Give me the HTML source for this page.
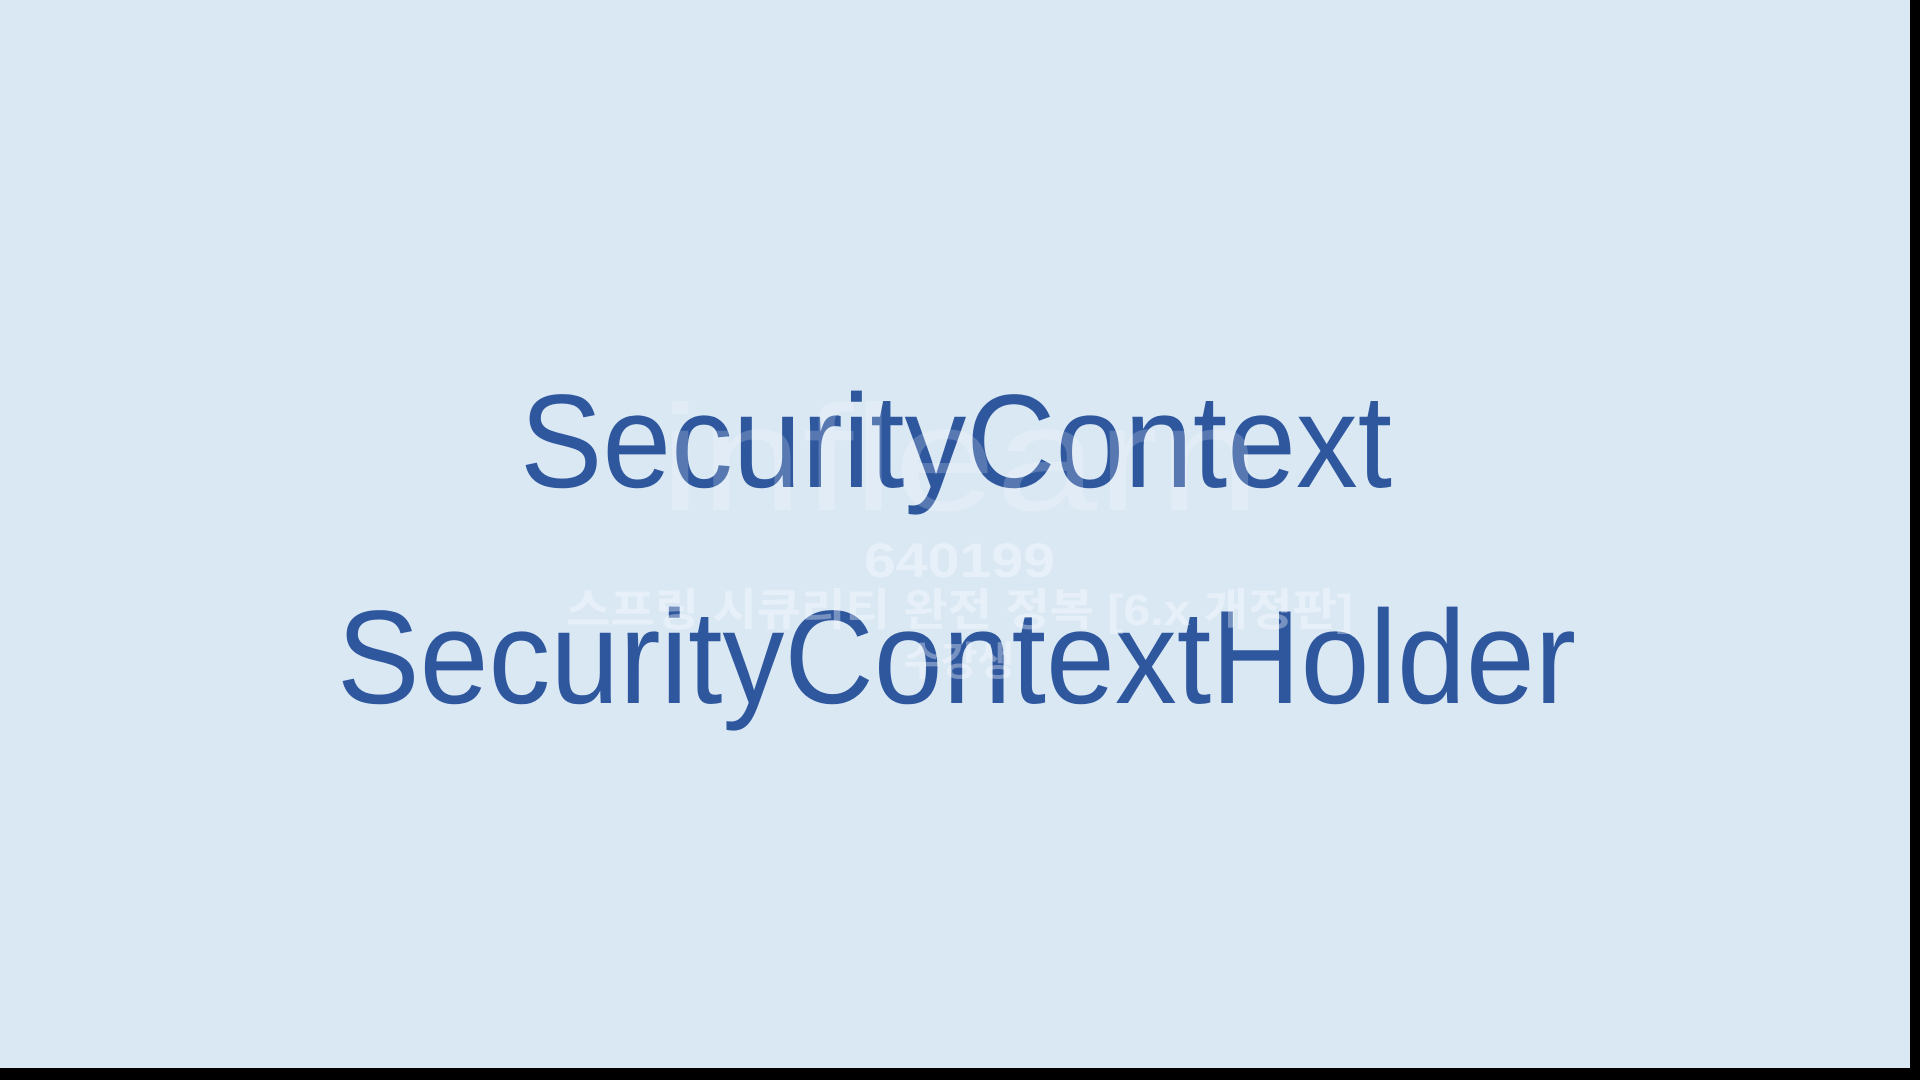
<!DOCTYPE html>
<html><head><meta charset="utf-8"><style>
html,body{margin:0;padding:0;width:1920px;height:1080px;overflow:hidden;background:#000}
</style></head><body>
<svg width="1920" height="1080" xmlns="http://www.w3.org/2000/svg" style="display:block">
<rect x="0" y="0" width="1920" height="1080" fill="#000"/>
<rect x="0" y="0" width="1910" height="1068" fill="#dae8f4"/>
<text x="520" y="487" font-family="Liberation Sans, sans-serif" font-size="133" fill="#2e579e" textLength="872" lengthAdjust="spacingAndGlyphs">SecurityContext</text>
<text x="337" y="703" font-family="Liberation Sans, sans-serif" font-size="133" fill="#2e579e" textLength="1239" lengthAdjust="spacingAndGlyphs">SecurityContextHolder</text>
<g fill="#ffffff" fill-opacity="0.35" font-family="Liberation Sans, 'Noto Sans CJK KR', sans-serif" font-weight="bold">
<text x="660" y="510" font-size="150" font-weight="normal" fill-opacity="0.2" textLength="600" lengthAdjust="spacingAndGlyphs">inflearn</text>
<text x="864" y="577" font-size="48" textLength="191" lengthAdjust="spacingAndGlyphs">640199</text>
<text x="566" y="625" font-size="44" textLength="787" lengthAdjust="spacingAndGlyphs">스프링 시큐리티 완전 정복 [6.x 개정판]</text>
<text x="959" y="675" font-size="40" text-anchor="middle">수강생</text>
</g>
</svg>
</body></html>
